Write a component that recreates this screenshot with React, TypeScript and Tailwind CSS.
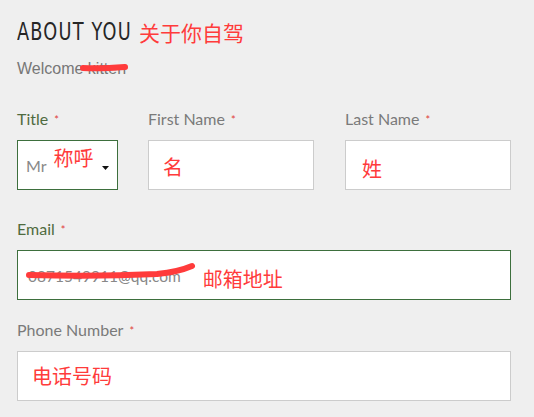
import React from 'react';

const cjk = "font-['Noto_Sans_CJK_SC',sans-serif]";

function Label({ text, active }: { text: string; active?: boolean }) {
  return (
    <div className={`h-[20px] leading-[20px] text-[16px] font-['Lato',sans-serif] ${active ? 'text-[#4f6b3f]' : 'text-[#7a7a7a]'}`}>
      {text}
      <span className="ml-[6px] text-[11px] relative top-[-1px] text-[#e0403a]">*</span>
    </div>
  );
}

function Note({ text, className = '' }: { text: string; className?: string }) {
  return <span className={`${cjk} text-[20px] leading-none text-[#ff3b3b] ${className}`}>{text}</span>;
}

export default function App() {
  return (
    <div className="w-[534px] h-[417px] bg-[#efefef] overflow-hidden">
      <div className="pl-[17px] pt-[16px] w-[511px]">
        {/* heading */}
        <div className="flex items-center h-[32px]">
          <h2 className="font-['DejaVu_Sans_Condensed','Liberation_Sans_Narrow',sans-serif] text-[24px] tracking-[1.5px] text-[#262626] leading-none scale-x-[0.82] origin-left w-[122px] whitespace-nowrap">
            ABOUT YOU
          </h2>
          <Note text="关于你自驾" className="text-[21px] mt-[1px]" />
        </div>

        {/* welcome */}
        <div className="relative mt-[10px] h-[22px] leading-[22px] text-[16px] font-['Liberation_Sans',sans-serif] text-[#777]">
          Welcome kitten
          <svg className="absolute left-[63px] top-[5px]" width="50" height="10" viewBox="0 0 50 10">
            <path d="M3 5 Q20 6 45 4" stroke="#ff3b3b" strokeWidth="6" strokeLinecap="round" fill="none" />
          </svg>
        </div>

        {/* name row */}
        <div className="mt-[29px] flex gap-[30px]">
          <div className="w-[101px]">
            <Label text="Title" active />
            <div className="mt-[11px] h-[50px] border border-[#3d6f3d] bg-white flex items-center pl-[8px] pr-[8px]">
              <span className="font-['Lato',sans-serif] text-[16px] text-[#888] mt-[2px]">Mr</span>
              <Note text="称呼" className="ml-[7px] -mt-[14px]" />
              <svg className="ml-auto mt-[6px]" width="7" height="4" viewBox="0 0 7 4">
                <path d="M0 0 H7 L3.5 4 Z" fill="#111" />
              </svg>
            </div>
          </div>
          <div className="w-[166px]">
            <Label text="First Name" />
            <div className="mt-[11px] h-[50px] border border-[#cccccc] bg-white pl-[14px] pt-[16px]">
              <Note text="名" />
            </div>
          </div>
          <div className="w-[166px] ml-[1px]">
            <Label text="Last Name" />
            <div className="mt-[11px] h-[50px] border border-[#cccccc] bg-white pl-[16px] pt-[18px]">
              <Note text="姓" />
            </div>
          </div>
        </div>

        {/* email */}
        <div className="mt-[29px]">
          <Label text="Email" active />
          <div className="relative mt-[11px] h-[50px] border border-[#3d6f3d] bg-white flex items-center pl-[10px]">
            <span className="font-['Lato',sans-serif] text-[15.5px] text-[#888] mt-[3px]">0871549911@qq.com</span>
            <Note text="邮箱地址" className="ml-[22px] mt-[8px]" />
            <svg className="absolute left-[7px] top-[11px]" width="172" height="18" viewBox="0 0 172 18">
              <path d="M4 13 C40 14 90 14 132 12 C152 10 160 7 167 4" stroke="#ff3b3b" strokeWidth="6" strokeLinecap="round" fill="none" />
            </svg>
          </div>
        </div>

        {/* phone */}
        <div className="mt-[20px]">
          <Label text="Phone Number" />
          <div className="mt-[11px] h-[50px] border border-[#cccccc] bg-white pl-[14px] pt-[14px]">
            <Note text="电话号码" />
          </div>
        </div>
      </div>
    </div>
  );
}
